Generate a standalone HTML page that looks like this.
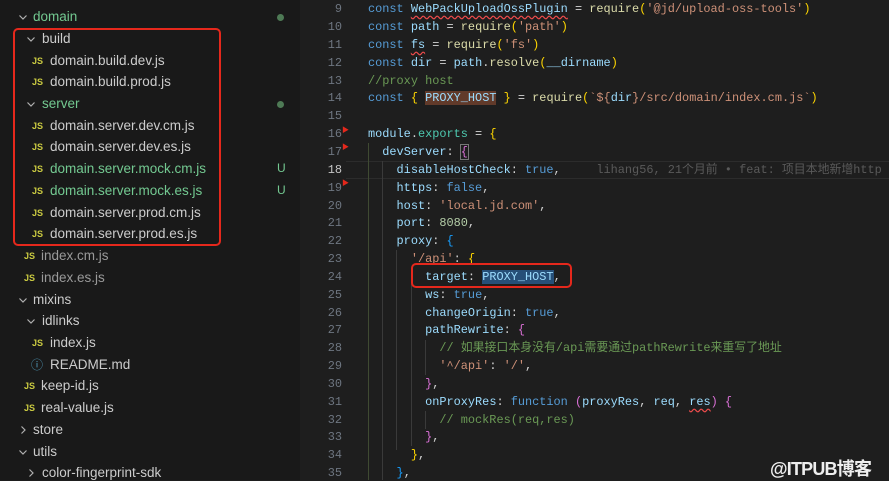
<!DOCTYPE html>
<html><head><meta charset="utf-8"><style>
*{margin:0;padding:0;box-sizing:border-box}
body{width:889px;height:480px;overflow:hidden;background:#1e1e1e;position:relative;font-family:"Liberation Sans","Noto Sans CJK SC",sans-serif}
#side{position:absolute;left:0;top:0;width:300px;height:480px;background:#191919}
.r{position:absolute;font-size:13.5px;color:#cccccc;white-space:nowrap;line-height:16px}
.g{color:#73c991}
.dim{color:#9a9a9a}
.chev{position:absolute;width:10px;height:10px}
.js{position:absolute;font-size:9px;font-weight:bold;color:#cbcb41;line-height:16px;font-family:"Liberation Sans",sans-serif}
.u{position:absolute;left:277px;font-size:12px;color:#73c991}
.dot{position:absolute;left:277px;width:7px;height:7px;border-radius:50%;background:#4e7a55}
.box{position:absolute;border:2px solid #e5281c;border-radius:5px}
#code{position:absolute;left:300px;top:0;width:589px;height:480px;font-family:"Liberation Mono","Noto Sans CJK SC",monospace;font-size:11.9px}
.ln{position:absolute;left:0;width:42px;text-align:right;color:#6e7681;line-height:16px}
.cl{position:absolute;left:68px;white-space:pre;color:#d4d4d4;line-height:16px}
.k{color:#569cd6}.v{color:#9cdcfe}.f{color:#dcdcaa}.s{color:#ce9178}.c{color:#6a9955}.y{color:#ffd700}.p{color:#da70d6}.b{color:#179fff}.n{color:#b5cea8}.t{color:#4ec9b0}
.sq{text-decoration:underline wavy #f14c4c;text-underline-offset:3px}
.guide{position:absolute;width:1px;background:#3a3a3a}
</style></head><body>
<svg width="0" height="0" style="position:absolute"><defs>
<symbol id="dn" viewBox="0 0 10 10"><polyline points="1.5,3.5 5,7 8.5,3.5" fill="none" stroke="#b0b0b0" stroke-width="1.2"/></symbol>
<symbol id="rt" viewBox="0 0 10 10"><polyline points="3.5,1.5 7,5 3.5,8.5" fill="none" stroke="#b0b0b0" stroke-width="1.2"/></symbol>
</defs></svg>
<div id="side">
<svg class="chev" style="left:18px;top:12px"><use href="#dn"/></svg><div class="r g" style="left:33px;top:9px">domain</div><div class="dot" style="top:14px"></div>
<svg class="chev" style="left:26px;top:34px"><use href="#dn"/></svg><div class="r" style="left:42px;top:31px">build</div>
<span class="js" style="left:32px;top:53px">JS</span><div class="r" style="left:50px;top:53px">domain.build.dev.js</div>
<span class="js" style="left:32px;top:74px">JS</span><div class="r" style="left:50px;top:74px">domain.build.prod.js</div>
<svg class="chev" style="left:26px;top:99px"><use href="#dn"/></svg><div class="r g" style="left:42px;top:96px">server</div><div class="dot" style="top:101px"></div>
<span class="js" style="left:32px;top:118px">JS</span><div class="r" style="left:50px;top:118px">domain.server.dev.cm.js</div>
<span class="js" style="left:32px;top:139px">JS</span><div class="r" style="left:50px;top:139px">domain.server.dev.es.js</div>
<span class="js" style="left:32px;top:161px">JS</span><div class="r g" style="left:50px;top:161px">domain.server.mock.cm.js</div><div class="u" style="top:161px">U</div>
<span class="js" style="left:32px;top:183px">JS</span><div class="r g" style="left:50px;top:183px">domain.server.mock.es.js</div><div class="u" style="top:183px">U</div>
<span class="js" style="left:32px;top:205px">JS</span><div class="r" style="left:50px;top:205px">domain.server.prod.cm.js</div>
<span class="js" style="left:32px;top:226px">JS</span><div class="r" style="left:50px;top:226px">domain.server.prod.es.js</div>
<span class="js" style="left:24px;top:248px">JS</span><div class="r dim" style="left:41px;top:248px">index.cm.js</div>
<span class="js" style="left:24px;top:270px">JS</span><div class="r dim" style="left:41px;top:270px">index.es.js</div>
<svg class="chev" style="left:18px;top:295px"><use href="#dn"/></svg><div class="r" style="left:33px;top:292px">mixins</div>
<svg class="chev" style="left:26px;top:316px"><use href="#dn"/></svg><div class="r" style="left:42px;top:313px">idlinks</div>
<span class="js" style="left:32px;top:335px">JS</span><div class="r" style="left:50px;top:335px">index.js</div>
<span style="position:absolute;left:31px;top:357px;font-size:12px;color:#519aba;line-height:16px">&#9432;</span><div class="r" style="left:50px;top:357px">README.md</div>
<span class="js" style="left:24px;top:378px">JS</span><div class="r" style="left:41px;top:378px">keep-id.js</div>
<span class="js" style="left:24px;top:400px">JS</span><div class="r" style="left:41px;top:400px">real-value.js</div>
<svg class="chev" style="left:18px;top:425px"><use href="#rt"/></svg><div class="r" style="left:33px;top:422px">store</div>
<svg class="chev" style="left:18px;top:447px"><use href="#dn"/></svg><div class="r" style="left:33px;top:444px">utils</div>
<svg class="chev" style="left:26px;top:468px"><use href="#rt"/></svg><div class="r" style="left:42px;top:465px">color-fingerprint-sdk</div>
<div class="box" style="left:13px;top:28px;width:208px;height:218px"></div>
</div>
<div id="code">
<div style="position:absolute;left:46px;top:161px;width:543px;height:18px;border-top:1px solid #2c2c2c;border-bottom:1px solid #2c2c2c"></div>
<div class="guide" style="left:68px;top:143px;height:337px;background:#3f4a32"></div>
<div class="guide" style="left:82px;top:161px;height:319px"></div>
<div class="guide" style="left:96px;top:250px;height:200px"></div>
<div class="guide" style="left:111px;top:268px;height:178px"></div>
<div class="guide" style="left:125px;top:340px;height:35px"></div>
<div class="guide" style="left:125px;top:411px;height:18px"></div>
<span style="position:absolute;left:42px;top:125px;color:#e5281c;font-size:7px">&#9654;</span>
<span style="position:absolute;left:42px;top:142px;color:#e5281c;font-size:7px">&#9654;</span>
<span style="position:absolute;left:42px;top:178px;color:#e5281c;font-size:7px">&#9654;</span>
<div class="ln" style="top:1px">9</div><div class="cl" style="top:1px"><span class="k">const</span> <span class="v sq">WebPackUploadOssPlugin</span> = <span class="f">require</span><span class="y">(</span><span class="s">'@jd/upload-oss-tools'</span><span class="y">)</span></div>
<div class="ln" style="top:19px">10</div><div class="cl" style="top:19px"><span class="k">const</span> <span class="v">path</span> = <span class="f">require</span><span class="y">(</span><span class="s">'path'</span><span class="y">)</span></div>
<div class="ln" style="top:37px">11</div><div class="cl" style="top:37px"><span class="k">const</span> <span class="v sq">fs</span> = <span class="f">require</span><span class="y">(</span><span class="s">'fs'</span><span class="y">)</span></div>
<div class="ln" style="top:55px">12</div><div class="cl" style="top:55px"><span class="k">const</span> <span class="v">dir</span> = <span class="v">path</span>.<span class="f">resolve</span><span class="y">(</span><span class="v">__dirname</span><span class="y">)</span></div>
<div class="ln" style="top:73px">13</div><div class="cl c" style="top:73px">//proxy host</div>
<div class="ln" style="top:90px">14</div><div class="cl" style="top:90px"><span class="k">const</span> <span class="y">{</span> <span class="v" style="background:#613a2a">PROXY_HOST</span> <span class="y">}</span> = <span class="f">require</span><span class="y">(</span><span class="s">`${</span><span class="v">dir</span><span class="s">}/src/domain/index.cm.js`</span><span class="y">)</span></div>
<div class="ln" style="top:108px">15</div>
<div class="ln" style="top:126px">16</div><div class="cl" style="top:126px"><span class="v">module</span>.<span class="t">exports</span> = <span class="y">{</span></div>
<div class="ln" style="top:144px">17</div><div class="cl" style="top:144px">  <span class="v">devServer</span>: <span class="p" style="outline:1px solid #777">{</span></div>
<div class="ln" style="top:162px;color:#c6c6c6">18</div><div class="cl" style="top:162px">    <span class="v">disableHostCheck</span>: <span class="k">true</span>,     <span style="color:#5a5a5a">lihang56, 21个月前 • feat: 项目本地新增http</span></div>
<div class="ln" style="top:180px">19</div><div class="cl" style="top:180px">    <span class="v">https</span>: <span class="k">false</span>,</div>
<div class="ln" style="top:198px">20</div><div class="cl" style="top:198px">    <span class="v">host</span>: <span class="s">'local.jd.com'</span>,</div>
<div class="ln" style="top:215px">21</div><div class="cl" style="top:215px">    <span class="v">port</span>: <span class="n">8080</span>,</div>
<div class="ln" style="top:233px">22</div><div class="cl" style="top:233px">    <span class="v">proxy</span>: <span class="b">{</span></div>
<div class="ln" style="top:251px">23</div><div class="cl" style="top:251px">      <span class="s">'/api'</span>: <span class="y">{</span></div>
<div class="ln" style="top:269px">24</div><div class="cl" style="top:269px">        <span class="v">target</span>: <span class="v" style="background:#264f78">PROXY_HOST</span>,</div>
<div class="ln" style="top:287px">25</div><div class="cl" style="top:287px">        <span class="v">ws</span>: <span class="k">true</span>,</div>
<div class="ln" style="top:305px">26</div><div class="cl" style="top:305px">        <span class="v">changeOrigin</span>: <span class="k">true</span>,</div>
<div class="ln" style="top:322px">27</div><div class="cl" style="top:322px">        <span class="v">pathRewrite</span>: <span class="p">{</span></div>
<div class="ln" style="top:340px">28</div><div class="cl c" style="top:340px">          // 如果接口本身没有/api需要通过pathRewrite来重写了地址</div>
<div class="ln" style="top:358px">29</div><div class="cl" style="top:358px">          <span class="s">'^/api'</span>: <span class="s">'/'</span>,</div>
<div class="ln" style="top:376px">30</div><div class="cl" style="top:376px">        <span class="p">}</span>,</div>
<div class="ln" style="top:394px">31</div><div class="cl" style="top:394px">        <span class="v">onProxyRes</span>: <span class="k">function</span> <span class="p">(</span><span class="v">proxyRes</span>, <span class="v">req</span>, <span class="v sq">res</span><span class="p">)</span> <span class="p">{</span></div>
<div class="ln" style="top:412px">32</div><div class="cl c" style="top:412px">          // mockRes(req,res)</div>
<div class="ln" style="top:429px">33</div><div class="cl" style="top:429px">        <span class="p">}</span>,</div>
<div class="ln" style="top:447px">34</div><div class="cl" style="top:447px">      <span class="y">}</span>,</div>
<div class="ln" style="top:465px">35</div><div class="cl" style="top:465px">    <span class="b">}</span>,</div>
<div class="box" style="left:111px;top:263px;width:161px;height:25px"></div>
<div style="position:absolute;left:470px;top:455px;font-family:'Liberation Sans','Noto Sans CJK SC',sans-serif;font-size:18px;font-weight:bold;color:#eee;letter-spacing:-0.8px">@ITPUB博客</div>
</div>
</body></html>
